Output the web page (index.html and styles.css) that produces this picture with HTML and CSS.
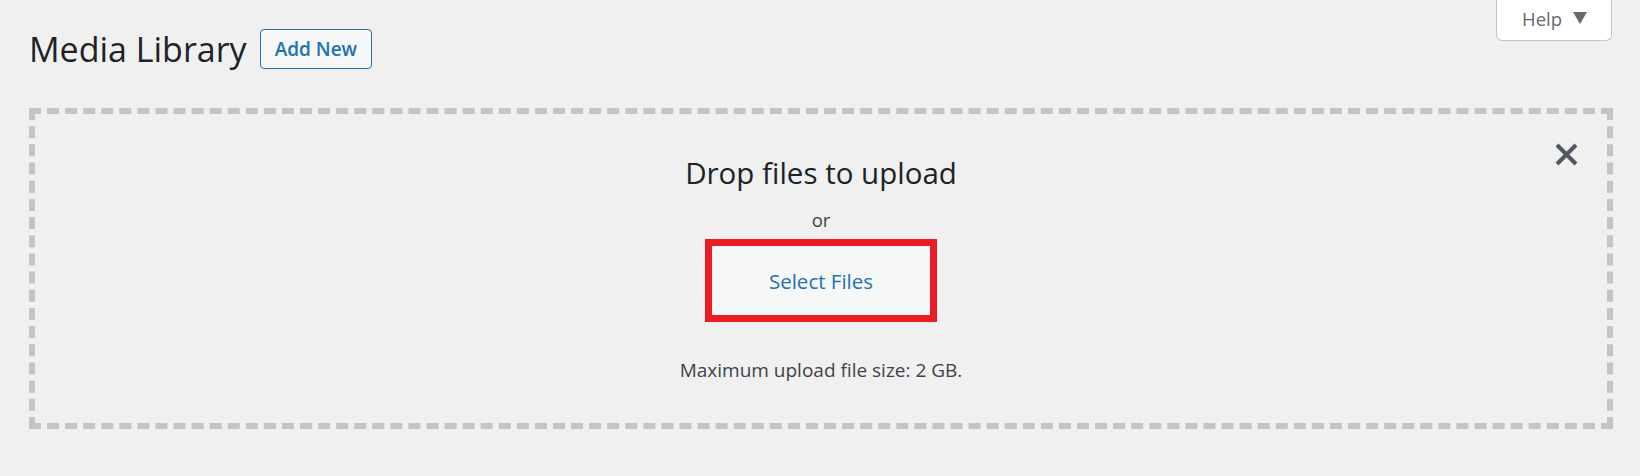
FILE: index.html
```html
<!DOCTYPE html>
<html lang="en">
<head>
<meta charset="utf-8">
<title>Media Library</title>
<link rel="stylesheet" href="styles.css">
</head>
<body>
<div class="screen-meta-links">
  <button class="help-tab" type="button">Help <svg class="help-arrow" width="14" height="12" viewBox="0 0 14 12"><path d="M0 0 H14 L7 12 Z" fill="#646970"/></svg></button>
</div>
<div class="wrap">
  <div class="title-row">
    <h1 class="page-title">Media Library</h1>
    <a class="page-title-action" href="#">Add New</a>
  </div>
  <div class="uploader">
    <button class="close-btn" type="button" aria-label="Close uploader">
      <svg width="23" height="23" viewBox="0 0 23 23"><path d="M2 2 L21 21 M21 2 L2 21" stroke="#50575e" stroke-width="4" fill="none"/></svg>
    </button>
    <div class="drop-title">Drop files to upload</div>
    <div class="drop-or">or</div>
    <button class="select-files" type="button">Select Files</button>
    <p class="max-size">Maximum upload file size: 2 GB.</p>
  </div>
</div>
</body>
</html>
```
FILE: styles.css
```css
html, body {
  margin: 0;
  padding: 0;
}
body {
  background: #f0f0f1;
  font-family: "Open Sans", "Noto Sans", sans-serif;
  color: #3c434a;
}
.screen-meta-links {
  float: right;
  margin-right: 28px;
}
.help-tab {
  display: flex;
  align-items: center;
  gap: 11px;
  box-sizing: border-box;
  width: 116px;
  height: 41px;
  padding: 0 0 3px 25px;
  margin: 0;
  border: 1px solid #c3c4c7;
  border-top: none;
  border-radius: 0 0 6px 6px;
  background: #fff;
  font-family: inherit;
  font-size: 18.5px;
  color: #646970;
}
.help-arrow {
  display: block;
  margin-bottom: 1px;
}
.wrap {
  margin: 0 27px 0 29px;
}
.title-row {
  display: flex;
  align-items: center;
  gap: 13px;
  height: 40px;
  padding-top: 29px;
}
.page-title {
  margin: 0;
  font-size: 34px;
  font-weight: 400;
  line-height: 44px;
  color: #1d2327;
}
.page-title-action {
  box-sizing: border-box;
  display: flex;
  align-items: center;
  height: 40px;
  padding: 0 14px;
  border: 1px solid #2271b1;
  border-radius: 4px;
  background: #f6f7f7;
  color: #2271b1;
  font-size: 19px;
  font-weight: 600;
  text-decoration: none;
}
.uploader {
  position: relative;
  margin-top: 39px;
  height: 309px;
  box-sizing: content-box;
  border: 6px dashed #c3c4c7;
  display: flex;
  flex-direction: column;
  align-items: center;
}
.close-btn {
  position: absolute;
  top: 29px;
  right: 29px;
  width: 23px;
  height: 23px;
  padding: 0;
  border: 0;
  background: none;
  line-height: 0;
}
.drop-title {
  margin-top: 41px;
  font-size: 29.5px;
  line-height: 36px;
  color: #1d2327;
}
.drop-or {
  margin-top: 17px;
  font-size: 18.5px;
  line-height: 24px;
  color: #3c434a;
}
.select-files {
  margin-top: 7px;
  box-sizing: border-box;
  width: 232px;
  height: 83px;
  padding: 0;
  border: 7px solid #ed1c24;
  background: #f6f7f7;
  color: #2271b1;
  font-family: inherit;
  font-size: 20.5px;
}
.max-size {
  margin: 36px 0 0;
  font-size: 19px;
  line-height: 24px;
  color: #3c434a;
}
```
